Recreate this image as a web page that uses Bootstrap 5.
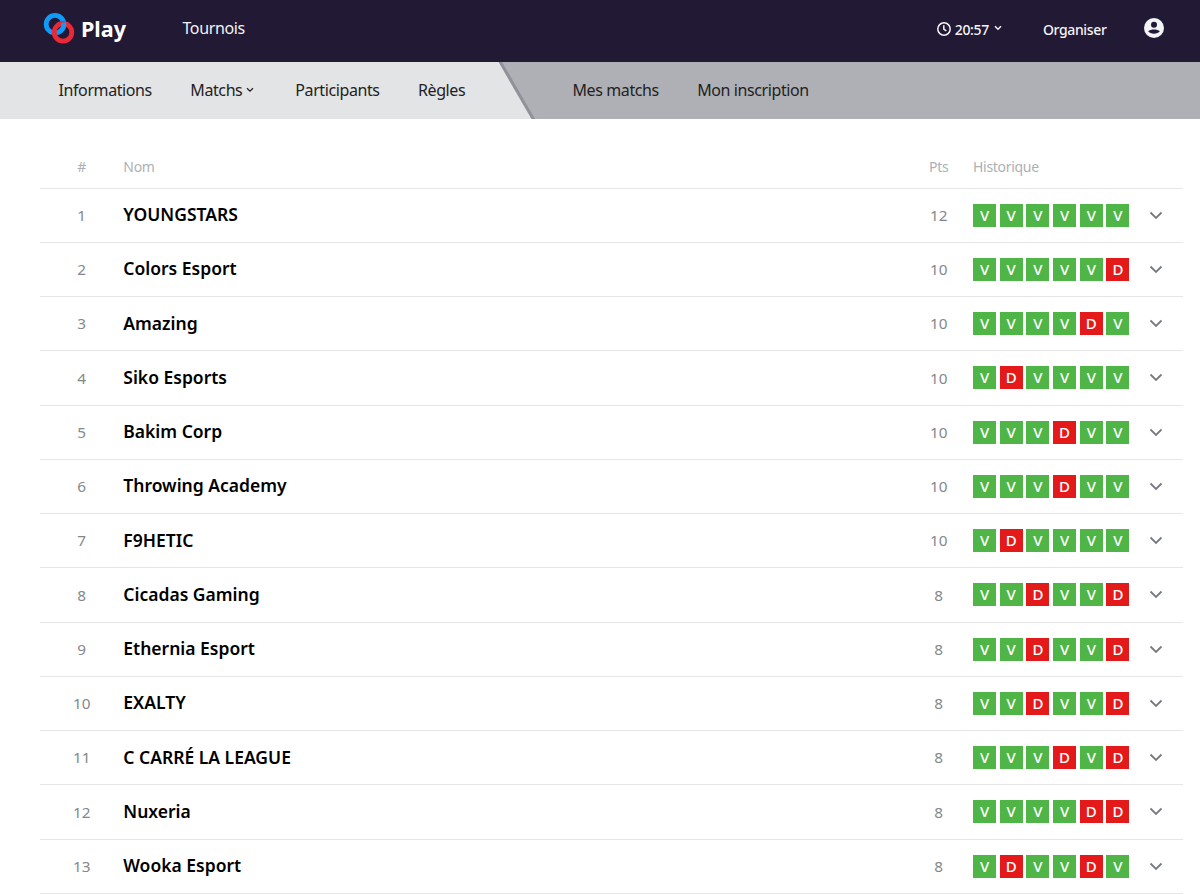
<!DOCTYPE html>
<html lang="fr">
<head>
<meta charset="utf-8">
<meta name="viewport" content="width=device-width, initial-scale=1">
<title>Play - Classement</title>
<link href="https://cdn.jsdelivr.net/npm/bootstrap@5.3.0/dist/css/bootstrap.min.css" rel="stylesheet">
<style>
body{font-family:"Noto Sans","Open Sans",sans-serif;color:#222;background:#fff;overflow:hidden}
a{color:inherit;text-decoration:none;white-space:nowrap}
.topbar{height:62px;background:#221934;color:#f4f3f6;padding-left:43px;padding-right:35px;padding-bottom:3px}
.brand-mark{margin-top:-3px}
.brand-name{font-size:21.500px;font-weight:700;color:#fff;line-height:1;margin-left:6px;margin-top:-2px}
.top-link{font-size:16px;letter-spacing:-.350px;margin-left:56.500px;margin-top:-3px}
.top-small{font-size:14px;letter-spacing:-.350px;font-weight:500;margin-top:-1px}
.org{margin-left:41px;margin-right:36.500px}
.time-caret{margin:-3px 0 0 5px}
.acct{margin-top:-3px}
.subbar{height:57px;background:#afb0b6;font-size:16px;letter-spacing:-.4px}
.subbar a{margin-top:-2px}
.sub-main{width:536px;padding-left:58.500px;background:#8f9299;clip-path:polygon(0 0,502px 0,535px 100%,0 100%);position:relative;isolation:isolate}
.sub-main::before{content:"";position:absolute;inset:0;z-index:-1;background:#e3e4e6;clip-path:polygon(0 0,498.500px 0,531.500px 100%,0 100%)}
.sub-gap{gap:38.400px}
.has-caret{margin-right:2.500px}
.sub-own{padding-left:36.500px}
.ranking{margin:26px 17px 0 40px}
.rank-row{height:54.250px;border-bottom:1px solid #e6e6e8;font-size:15.300px;color:#84888c}
.rank-head{height:43.600px;font-size:14px;letter-spacing:-.3px;color:#adb0b5}
.c-pos{width:83.300px;text-align:center}
.c-pts{width:31px;text-align:center;margin-right:18.800px}
.c-hist{width:157px;gap:3.700px;margin-right:19px}
.c-more{width:34px}
.team{font-size:17.500px;font-weight:600;color:#000;margin-top:-2px}
.res{width:23px;height:23px;font-size:15px;line-height:23px;text-align:center;color:#fff;font-weight:500}
.res-v{background:#4fb547}
.res-d{background:#e41a1a}
</style>
</head>
<body>
<header class="topbar d-flex align-items-center">
  <a href="#" class="d-flex align-items-center">
    <svg class="brand-mark" width="32" height="32" viewBox="0 0 32 32" fill="none" stroke-width="4.800">
      <circle cx="12" cy="12.200" r="8.800" stroke="#109bfb"/>
      <circle cx="20" cy="20.300" r="8.800" stroke="#e92936"/>
      <path d="M20.700 10.500A8.800 8.800 0 0 1 17 19.400" stroke="#109bfb"/>
    </svg>
    <span class="brand-name">Play</span>
  </a>
  <a href="#" class="top-link">Tournois</a>
  <a href="#" class="top-small ms-auto d-flex align-items-center">
    <svg width="14" height="14" viewBox="0 0 14 14" fill="none" stroke="currentColor" stroke-width="1.500" class="me-1"><circle cx="7" cy="7" r="6.200"/><path d="M6.800 3.200V7.200L9.300 8.800"/></svg>
    <span>20:57</span>
    <svg width="8" height="6" viewBox="0 0 8 6" fill="none" stroke="currentColor" stroke-width="1.500" class="time-caret"><path d="M1 1.200 4 4.200 7 1.200"/></svg>
  </a>
  <a href="#" class="top-small org">Organiser</a>
  <a href="#" class="acct d-flex" aria-label="Compte">
    <svg width="22" height="22" viewBox="0 0 22 22"><circle cx="11" cy="11" r="10" fill="#f4f3f6"/><circle cx="11" cy="7.700" r="3" fill="#221934"/><path d="M5.200 14.300C7.600 11.900 14.400 11.900 16.800 14.300 14.700 17.600 7.300 17.600 5.200 14.300Z" fill="#221934"/></svg>
  </a>
</header>
<nav class="subbar d-flex">
  <div class="sub-main sub-gap d-flex align-items-center flex-shrink-0">
    <a href="#">Informations</a>
    <a href="#" class="has-caret d-flex align-items-center">Matchs
      <svg width="8" height="6" viewBox="0 0 8 6" fill="none" stroke="currentColor" stroke-width="1.300" class="ms-1"><path d="M1 1.200 4 4.200 7 1.200"/></svg></a>
    <a href="#">Participants</a>
    <a href="#">Règles</a>
  </div>
  <div class="sub-own sub-gap d-flex align-items-center">
    <a href="#">Mes matchs</a>
    <a href="#">Mon inscription</a>
  </div>
</nav>
<main class="ranking">
  <div class="rank-row rank-head d-flex align-items-center">
    <div class="c-pos">#</div><div class="flex-grow-1">Nom</div><div class="c-pts">Pts</div><div class="c-hist">Historique</div><div class="c-more"></div>
  </div>
  <div id="rows"></div>
</main>
<script>
const teams = [
  ["YOUNGSTARS",12,"VVVVVV"],["Colors Esport",10,"VVVVVD"],["Amazing",10,"VVVVDV"],
  ["Siko Esports",10,"VDVVVV"],["Bakim Corp",10,"VVVDVV"],["Throwing Academy",10,"VVVDVV"],
  ["F9HETIC",10,"VDVVVV"],["Cicadas Gaming",8,"VVDVVD"],["Ethernia Esport",8,"VVDVVD"],
  ["EXALTY",8,"VVDVVD"],["C CARRÉ LA LEAGUE",8,"VVVDVD"],["Nuxeria",8,"VVVVDD"],["Wooka Esport",8,"VDVVDV"]
];
document.getElementById("rows").innerHTML = teams.map(([name, pts, hist], i) => `
  <div class="rank-row d-flex align-items-center">
    <div class="c-pos">${i + 1}</div>
    <div class="team flex-grow-1">${name}</div>
    <div class="c-pts">${pts}</div>
    <div class="c-hist d-flex">${[...hist].map(r => `<span class="res res-${r.toLowerCase()}">${r}</span>`).join("")}</div>
    <div class="c-more d-flex"><svg width="14" height="9" viewBox="0 0 14 9" fill="none" stroke="#777b80" stroke-width="1.800"><path d="M1.500 1.500 7 7 12.500 1.500"/></svg></div>
  </div>`).join("");
</script>
<script src="https://cdn.jsdelivr.net/npm/bootstrap@5.3.0/dist/js/bootstrap.bundle.min.js"></script>
</body>
</html>
